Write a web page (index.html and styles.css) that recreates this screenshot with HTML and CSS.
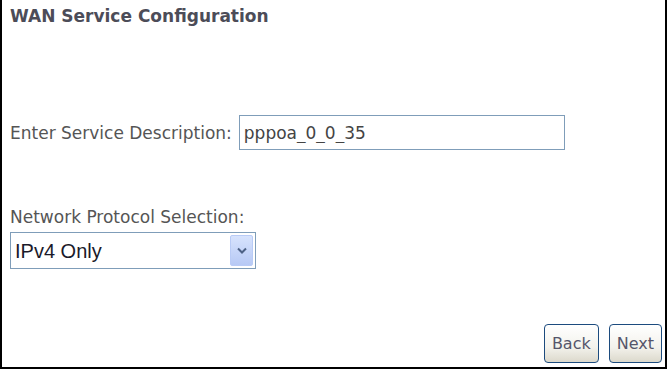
FILE: index.html
```html
<!DOCTYPE html>
<html lang="en">
<head>
    <meta charset="UTF-8">
    <title>WAN Service Configuration</title>
    <link rel="stylesheet" href="styles.css">
</head>
<body>
    <div id="frame">
        <h1>WAN Service Configuration</h1>

        <div class="field-row">
            <label for="serviceDesc">Enter Service Description:</label>
            <input type="text" id="serviceDesc" class="text-input" value="pppoa_0_0_35">
        </div>

        <div class="field-block">
            <label for="protocol">Network Protocol Selection:</label>
            <div class="select-box">
                <select id="protocol">
                    <option>IPv4 Only</option>
                    <option>IPv4&amp;IPv6(Dual Stack)</option>
                    <option>IPv6 Only</option>
                </select>
                <span class="select-arrow">
                    <svg width="10" height="7" viewBox="0 0 10 7">
                        <path d="M1 1.5 L5 5.5 L9 1.5" fill="none" stroke="#4d6185" stroke-width="2"/>
                    </svg>
                </span>
            </div>
        </div>

        <div class="buttons">
            <button type="button" class="xp-btn">Back</button>
            <button type="button" class="xp-btn">Next</button>
        </div>
    </div>
</body>
</html>
```

FILE: styles.css
```css
body {
    margin: 0;
    background-color: #ffffff;
    font-family: "DejaVu Sans", Tahoma, sans-serif;
}

#frame {
    width: 667px;
    height: 369px;
    box-sizing: border-box;
    border-left: 2px solid #000000;
    border-right: 2px solid #000000;
    border-bottom: 2px solid #000000;
    padding: 5px 3px 0 8px;
    display: flex;
    flex-direction: column;
}

h1 {
    margin: 0;
    font-size: 17px;
    line-height: 22px;
    font-weight: bold;
    color: #4c4c58;
}

label {
    font-size: 17px;
    line-height: 20px;
    color: #555555;
}

.field-row {
    display: flex;
    align-items: center;
    gap: 7px;
    margin-top: 88px;
}

.text-input {
    width: 326px;
    height: 35px;
    box-sizing: border-box;
    border: 1px solid #7f9db9;
    padding: 0 4px;
    font-family: "DejaVu Sans", Tahoma, sans-serif;
    font-size: 17px;
    color: #444444;
    outline: none;
}

.field-block {
    margin-top: 57px;
}

.field-block label {
    display: block;
    margin-bottom: 5px;
}

.select-box {
    width: 246px;
    height: 37px;
    box-sizing: border-box;
    border: 1px solid #7f9db9;
    display: flex;
    align-items: stretch;
    padding: 2px;
}

.select-box select {
    flex: 1;
    border: none;
    outline: none;
    appearance: none;
    background: transparent;
    padding: 0 2px;
    font-family: "Liberation Sans", Arial, sans-serif;
    font-size: 20px;
    color: #1a1a2a;
}

.select-arrow {
    width: 21px;
    border: 1px solid #b9cbf6;
    border-radius: 2px;
    background: linear-gradient(#d7e3fd, #b7c9f5);
    display: flex;
    align-items: center;
    justify-content: center;
}

.buttons {
    margin-top: auto;
    margin-bottom: 4px;
    display: flex;
    justify-content: flex-end;
    gap: 10px;
}

.xp-btn {
    height: 39px;
    padding: 0 7px;
    border: 1px solid #1c4b7e;
    border-radius: 4px;
    background: linear-gradient(#ffffff, #f3f2ec 60%, #dcd9cc);
    font-family: "DejaVu Sans", Tahoma, sans-serif;
    font-size: 16px;
    color: #55556a;
    cursor: pointer;
}
```
